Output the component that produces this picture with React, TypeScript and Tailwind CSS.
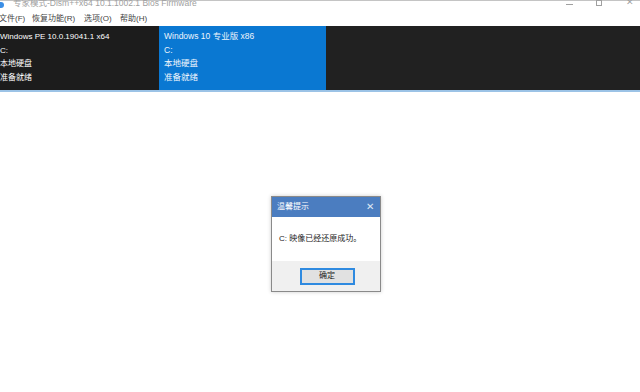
const font = { fontFamily: '"Segoe UI", "Liberation Sans", "Noto Sans CJK SC", sans-serif' };

function Panel({ lines, active }: { lines: string[]; active?: boolean }) {
  return (
    <div
      className={
        active
          ? "w-[167px] shrink-0 bg-[#0a78d2] pl-[5px] pt-[4px] text-[8.5px] text-[#eef5fc]"
          : "w-[162px] shrink-0 bg-[#1c1c1c] -ml-[3px] pl-[3px] pt-[4px] text-[8px] text-white"
      }
    >
      {lines.map((l, i) => (
        <div key={i} className="h-[13.5px] leading-[13.5px] whitespace-nowrap">
          {l}
        </div>
      ))}
    </div>
  );
}

export default function App() {
  return (
    <div className="relative h-[392px] w-[640px] overflow-hidden bg-white" style={font}>
      {/* title bar */}
      <div className="flex h-[12px] items-start border-t border-[#c4c4c4]">
        <div className="mt-[1px] h-[6px] w-[4px] rounded-r-sm bg-[#3a8ee6]" />
        <div className="-mt-[4px] ml-[9px] text-[8.5px] leading-[12px] text-[#a0a0a0] whitespace-nowrap">
          专家模式-Dism++x64 10.1.1002.1 Bios Firmware
        </div>
        <div className="ml-auto flex items-start">
          <div className="mt-[3px] h-px w-[7px] bg-[#a0a0a0]" />
          <div className="-mt-[1px] ml-[23px] h-[6px] w-[6px] border border-[#a0a0a0]" />
          <div className="-mt-[5px] ml-[24px] mr-[6px] text-[9px] leading-[12px] text-[#a0a0a0]">✕</div>
        </div>
      </div>
      {/* menu */}
      <div className="flex h-[14px] items-center -ml-[1px] text-[8px] leading-[14px] text-[#444]">
        <span className="w-[33px]">文件(F)</span>
        <span className="w-[52px]">恢复功能(R)</span>
        <span className="w-[36px]">选项(O)</span>
        <span>帮助(H)</span>
      </div>
      {/* dark bar */}
      <div className="flex h-[66px] border-b-2 border-[#9cc3e6] bg-[#212121]">
        <Panel lines={["Windows PE 10.0.19041.1 x64", "C:", "本地硬盘", "准备就绪"]} />
        <Panel active lines={["Windows 10 专业版 x86", "C:", "本地硬盘", "准备就绪"]} />
        <div className="flex-1" />
      </div>
      {/* dialog */}
      <div className="absolute left-[271px] top-[196px] flex h-[96px] w-[110px] flex-col border border-[#8a8a8a] bg-white shadow-[0_0_4px_rgba(0,0,0,0.2)]">
        <div className="flex h-[20px] items-center bg-[#4b7dc0] pl-[5px] pr-[6px] text-white">
          <span className="text-[8px]">温馨提示</span>
          <span className="ml-auto text-[10px] leading-none text-[#dfe8f4]">✕</span>
        </div>
        <div className="flex h-[44px] items-center pl-[7px] text-[8px] text-[#222] whitespace-nowrap">C: 映像已经还原成功。</div>
        <div className="flex flex-1 items-center justify-center bg-[#f0f0f0] pl-[2px]">
          <div className="flex h-[17px] w-[55px] items-center justify-center border-2 border-[#2f8ae0] bg-[#e1e1e1] text-[8px] text-[#222]">
            确定
          </div>
        </div>
      </div>
    </div>
  );
}
